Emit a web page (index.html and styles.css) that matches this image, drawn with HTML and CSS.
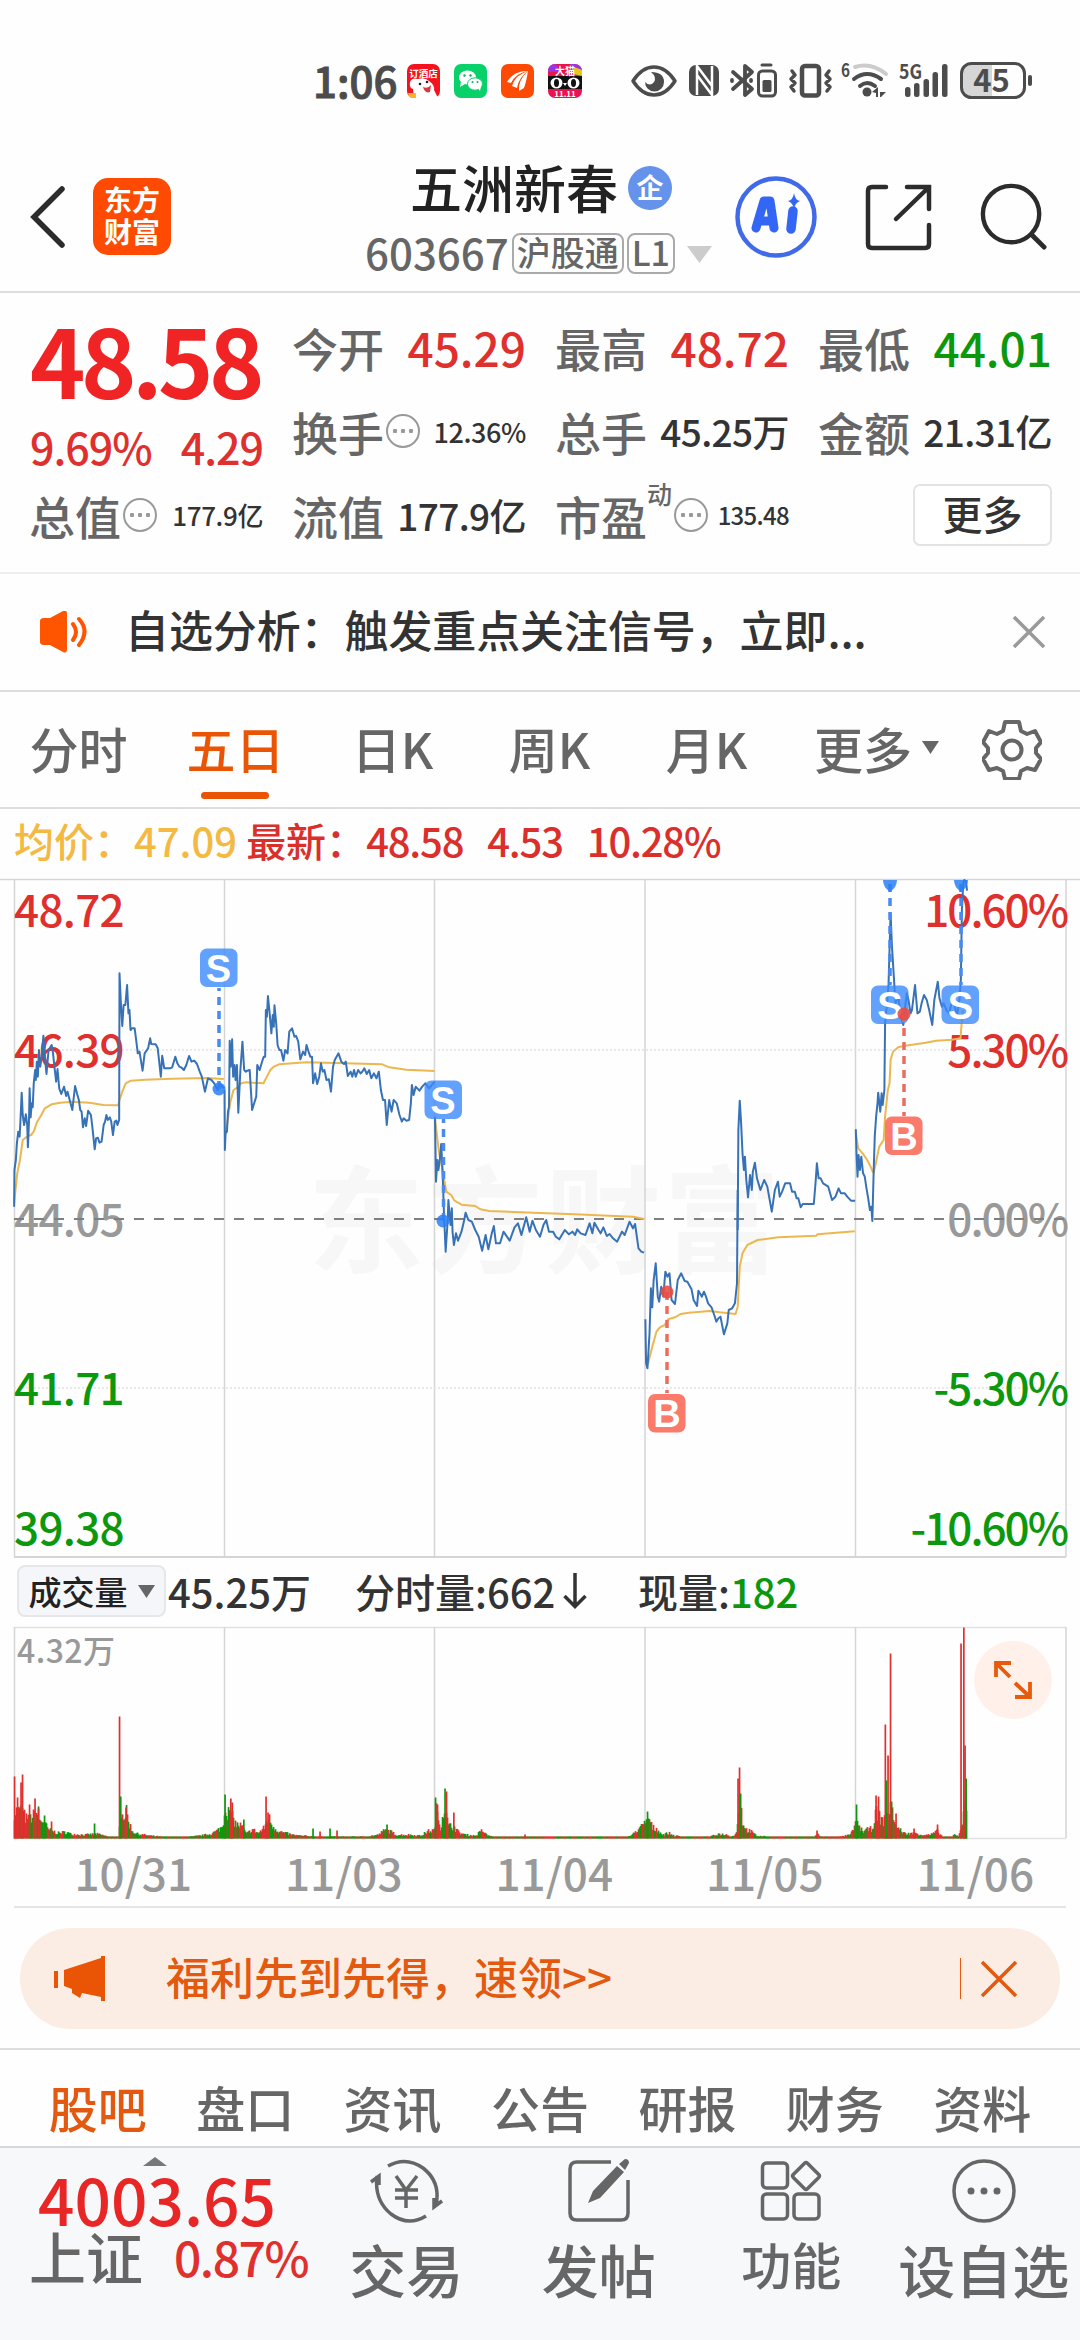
FILE: index.html
```html
<!DOCTYPE html>
<html lang="zh-CN">

<head>
    <meta charset="UTF-8">
    <meta name="viewport" content="width=device-width, initial-scale=1.0">
    <title>五洲新春 603667</title>
    <link rel="stylesheet" href="styles.css">
</head>

<body>
    <div class="status-bar">
        <span class="time">1:06</span>
        <div class="app-icons">
            <svg width="33" height="34" viewBox="0 0 33 34">
                <rect width="33" height="34" rx="7" fill="#f5121d" />
                <text x="16.500" y="13" font-size="9.500" font-weight="700" fill="#fff" text-anchor="middle">订酒店</text>
                <path d="M3 18q2-5 8-3q7-2 11 2q6 4 5 9l4 8H7l-1-9q-4-1-3-7z" fill="#fff" />
                <path d="M16 23q5 2 8-2l-1 7q-5 2-7-5z" fill="#e0353b" />
                <circle cx="13" cy="20" r="1.300" fill="#222" />
                <circle cx="20" cy="18" r="1.300" fill="#222" />
                <path d="M1 29h8v5H5q-3 0-4-5z" fill="#ffb32c" />
            </svg>
            <svg width="33" height="34" viewBox="0 0 33 34">
                <rect width="33" height="34" rx="7" fill="#09d16a" />
                <ellipse cx="13.500" cy="13.500" rx="8.500" ry="7" fill="#fff" />
                <path d="M7 18l-1 5l5-3z" fill="#fff" />
                <ellipse cx="21" cy="20" rx="7.500" ry="6.200" fill="#fff" stroke="#09d16a" />
                <path d="M24 24l2 3l1-5z" fill="#fff" />
                <g fill="#09b35c">
                    <circle cx="10.500" cy="11.500" r="1.200" />
                    <circle cx="16.500" cy="11.500" r="1.200" />
                    <circle cx="18.500" cy="18" r="1" />
                    <circle cx="23.500" cy="18" r="1" />
                </g>
            </svg>
            <svg width="33" height="34" viewBox="0 0 33 34">
                <rect width="33" height="34" rx="7" fill="#fd4a05" />
                <path d="M6 18q6-11 21-11q-12 2-17 12z" fill="#fff" />
                <path d="M11 22q3-11 16-15q-9 6-11 17z" fill="#fff" />
                <path d="M18 27q-1-11 9-20q-2 12-4 17z" fill="#fff" />
            </svg>
            <svg width="34" height="34" viewBox="0 0 34 34">
                <rect width="34" height="34" rx="7" fill="#ed1150" />
                <path d="M0 8q0-8 8-8l4 8zM22 0h5q7 1 7 8l-8 4z" fill="#9a35e0" />
                <path d="M26 3l8 3v6l-9-2z" fill="#e5c720" />
                <rect y="12" width="34" height="13" fill="#111" />
                <text x="17" y="11" font-size="10" font-weight="700" fill="#fff" text-anchor="middle">大猫</text>
                <g fill="#fff">
                    <ellipse cx="8.500" cy="19" rx="6" ry="5.500" />
                    <ellipse cx="25.500" cy="19" rx="6" ry="5.500" />
                    <path d="M15 19h4l-2 3z" />
                </g>
                <ellipse cx="8.500" cy="19" rx="2.500" ry="4" fill="#111" />
                <ellipse cx="25.500" cy="19" rx="2.500" ry="4" fill="#111" />
                <text x="17" y="32.500" font-size="8" font-weight="700" fill="#fff" text-anchor="middle">11.11</text>
            </svg>
        </div>
        <svg class="system-icons" width="410" height="44" viewBox="630 58 410 44">
            <g fill="none" stroke="#4c4c4c" stroke-width="3.500" stroke-linecap="round" stroke-linejoin="round">
                <path d="M633 81q9-14 21-14t21 14q-9 14-21 14t-21-14z" />
                <path d="M733 72l19 17l-7 6V66l7 6l-19 17M732 80v1M751 80v1" stroke-width="3.800" />
                <rect x="758.500" y="71" width="17" height="25" rx="4" stroke-width="3" />
                <path d="M762 65h9" stroke-width="3" />
                <rect x="802" y="66" width="17" height="29.500" rx="3" stroke-width="4.500" />
                <path d="M792 71l3 4l-4 4l4 4l-4 4l3 4M829 71l-3 4l4 4l-4 4l4 4l-3 4" stroke-width="3.500" />
                <path d="M855 67q16-5 31 7" stroke="#ccc" stroke-width="4" />
                <path d="M854 79q13-10 27 0M860 86q7-6 15 0" stroke-width="4" />
            </g>
            <g fill="#4c4c4c">
                <path d="M651 72q13 0 13 10a9 9 0 0 1-19 0q5 5 9 0q3-5-3-10z" />
                <rect x="689" y="65" width="30" height="31" rx="7" />
                <path d="M697 95V66l15 20M697 75l15 20V66" fill="none" stroke="#fff" stroke-width="2.500" />
                <rect x="762.500" y="80" width="9" height="12" rx="1.500" />
                <circle cx="867" cy="92" r="4.500" />
                <path d="M872 92l6-5v10h-2v-4zM880 87v5h6l-5 5h-1z" />
                <text x="841" y="77" font-size="19" font-weight="700" textLength="9" lengthAdjust="spacingAndGlyphs">6</text>
                <text x="899" y="79" font-size="20" font-weight="700" textLength="23" lengthAdjust="spacingAndGlyphs">5G</text>
                <rect x="905" y="87" width="5.500" height="10" rx="2.500" />
                <rect x="914" y="83" width="5.500" height="14" rx="2.500" />
                <rect x="923.500" y="79" width="5.500" height="18" rx="2.500" />
                <rect x="932.500" y="72" width="5.500" height="25" rx="2.500" />
                <rect x="942" y="64" width="5.500" height="33" rx="2.500" />
                <path d="M972 64h20v34h-20q-10 0-10-10V74q0-10 10-10z" fill="#d6d6d6" />
                <rect x="961.500" y="63.500" width="63" height="34" rx="10" fill="none" stroke="#4c4c4c" stroke-width="3" />
                <rect x="1028" y="75" width="4" height="11" rx="2" />
                <text x="991.500" y="92" font-size="31" font-weight="700" text-anchor="middle">45</text>
            </g>
        </svg>
    </div>

    <header class="header">
        <div class="header-left">
            <svg width="35" height="62" viewBox="0 0 35 62">
                <path d="M32 3L4 31l28 28" fill="none" stroke="#2c2c2c" stroke-width="5.500" stroke-linecap="round" />
            </svg>
            <div class="logo">东方<br>财富</div>
        </div>
        <div class="stock">
            <div class="stock-name">五洲新春<span class="stock-badge">企</span></div>
            <div class="stock-code">603667<span class="tag">沪股通</span><span class="tag">L1</span>
                <svg width="25" height="17" viewBox="0 0 25 17"><path d="M0 0h25L12.500 17z" fill="#ccc" /></svg>
            </div>
        </div>
        <div class="header-actions">
            <svg width="82" height="84" viewBox="734 175 82 84">
                <circle cx="775" cy="217" r="38.500" fill="none" stroke="#416ae9" stroke-width="4.500" />
                <path d="M755 228l8-27h6l4 27M758 221h12" fill="none" stroke="#3366f5" stroke-width="9" stroke-linecap="round" stroke-linejoin="round" />
                <path d="M792 211l-2 18" stroke="#3366f5" stroke-width="9.500" stroke-linecap="round" />
                <path d="M793 193q1 7 6 8q-5 2-6 8q-1-6-6-8q5-1 6-8z" fill="#3366f5" />
            </svg>
            <svg width="68" height="68" viewBox="862 183 68 68">
                <path d="M884 187h-14q-4 0-4 4v53q0 4 4 4h53q4 0 4-4v-19M905 187h22v22M925 189l-31 30" fill="none" stroke="#2c2c2c" stroke-width="4.500" stroke-linecap="round" />
            </svg>
            <svg width="68" height="68" viewBox="979 181 68 70">
                <circle cx="1011" cy="213" r="29" fill="none" stroke="#2c2c2c" stroke-width="4.500" />
                <path d="M1033 235l12 12" stroke="#2c2c2c" stroke-width="5" stroke-linecap="round" />
            </svg>
        </div>
    </header>

    <section class="quote">
        <div class="price-block">
            <div class="price">48.58</div>
            <div class="price-change"><span>9.69%</span><span>4.29</span></div>
        </div>
        <div class="cell"><label>今开</label><b class="red">45.29</b></div>
        <div class="cell"><label>最高</label><b class="red">48.72</b></div>
        <div class="cell"><label>最低</label><b class="green">44.01</b></div>
        <div class="cell"><label>换手</label><i class="info"></i><b class="small">12.36%</b></div>
        <div class="cell"><label>总手</label><b class="medium">45.25万</b></div>
        <div class="cell"><label>金额</label><b class="medium">21.31亿</b></div>
        <div class="cell"><label>总值</label><i class="info"></i><b class="small tight">177.9亿</b></div>
        <div class="cell"><label>流值</label><b class="medium">177.9亿</b></div>
        <div class="cell"><label>市盈</label><sup>动</sup><i class="info"></i><b class="tiny">135.48</b></div>
        <div class="cell"><button class="more-btn">更多</button></div>
    </section>

    <div class="notice">
        <svg width="51" height="42" viewBox="37 611 51 42">
            <path d="M40 621q0-3 4-3h6l13-7q4-2 4 3v35q0 5-4 3l-13-7h-6q-4 0-4-3z" fill="#ff5500" />
            <path d="M73 624q6 8 0 16M79 619q11 12 0 26" fill="none" stroke="#ff5500" stroke-width="4" stroke-linecap="round" />
        </svg>
        <span>自选分析：触发重点关注信号，立即...</span>
        <svg width="34" height="34" viewBox="0 0 34 34">
            <path d="M2 2l30 30M32 2L2 32" stroke="#999" stroke-width="3.500" />
        </svg>
    </div>

    <nav class="period-tabs">
        <a>分时</a>
        <a class="active">五日</a>
        <a>日K</a>
        <a>周K</a>
        <a>月K</a>
        <a class="more">更多<svg width="17" height="13" viewBox="0 0 17 13"><path d="M0 0h17L8.500 13z" fill="#666" /></svg></a>
        <svg class="gear" width="60" height="60" viewBox="981 720 60 60">
            <path d="M1004 722h14l2 9l6 3l8-3l6 11l-5 6v5l5 6l-6 11l-8-2l-6 3l-2 8h-14l-2-8l-6-3l-8 2l-6-11l5-6v-5l-5-6l6-11l8 3l6-3z" fill="none" stroke="#666" stroke-width="4" stroke-linejoin="round" />
            <circle cx="1011" cy="750" r="9.500" fill="none" stroke="#666" stroke-width="4" />
        </svg>
    </nav>

    <div class="legend">
        <span class="avg">均价：<em>47.09</em></span>
        <span class="last">最新：<em>48.58</em><em>4.53</em><em>10.28%</em></span>
    </div>

    <svg class="price-chart" width="1080" height="690" viewBox="0 870 1080 690">
        <text x="544" y="1264" class="watermark" text-anchor="middle" textLength="472">东方财富</text>
        <g class="grid">
            <path d="M0 879.500H1080" />
            <path d="M14.500 880V1557M224.500 880V1557M434.500 880V1557M645 880V1557M855.500 880V1557M1066 880V1557" />
            <path d="M14 1557H1066" stroke-width="2" />
            <path d="M14 1050H1066M14 1388H1066" stroke-dasharray="2 2" stroke="#e2e2e2" />
        </g>
        <g class="axis">
            <text x="14" y="927" class="red">48.72</text>
            <text x="14" y="1067" class="red">46.39</text>
            <text x="14" y="1236" class="gray">44.05</text>
            <text x="14" y="1405" class="green">41.71</text>
            <text x="14" y="1545" class="green">39.38</text>
        </g>
        <g class="axis end">
            <text x="1067" y="927" class="red">10.60%</text>
            <text x="1067" y="1067" class="red">5.30%</text>
            <text x="1067" y="1236" class="gray">0.00%</text>
            <text x="1067" y="1405" class="green">-5.30%</text>
            <text x="1067" y="1545" class="green">-10.60%</text>
        </g>
        <path d="M14 1219H1066" stroke="#808080" stroke-width="2" stroke-dasharray="10 10" />

        <!-- average price -->
        <g class="line avg-line">
            <g transform="translate(0 870) scale(.34439 .33333)">
                <path d="M41 1000L50 910L58 870L66 810L78 800L90 795L98 785L108 755L120 735L130 715L150 703L175 698L210 695L260 698L300 705L343 706L347 690L355 665L365 640L380 632L420 629L500 626L600 624L650 627" />
                <path d="M653 800L660 760L668 700L678 660L690 652L700 640L715 637L765 640L775 620L785 600L795 590L810 583L850 580L890 577L1000 580L1110 583L1130 592L1180 599L1262 603" />
                <path d="M1263 745L1275 850L1285 900L1290 930L1296 965L1310 975L1320 992L1340 1004L1380 1008L1395 1018L1420 1023L1568 1029L1668 1033L1838 1040L1871 1047" />
            </g>
            <g transform="translate(0 1200) scale(.68878 .33333)">
                <path d="M938 480L941 490L947 440L953 395L958 382L965 375L970 358L980 352L988 342L1000 338L1030 333L1045 337L1068 342L1071 320L1074 200L1078 160L1085 135L1100 120L1130 112L1185 107L1187 103L1241 94" />
            </g>
            <g transform="translate(540 870) scale(.34439 .33333)">
                <path d="M917 790L924 835L937 850L950 870L960 890L966 905L969 908L975 880L985 830L998 810L1002 740L1010 660L1015 640L1018 570L1025 545L1040 532L1060 527L1120 518L1150 512L1195 509L1221 505L1225 450L1228 420" />
            </g>
        </g>

        <!-- latest price -->
        <g class="line price-line">
            <g transform="translate(0 870) scale(.34439 .33333)">
                <path d="M41 1010L42 900L46 870L49 820L53 785L57 800L59 760L63 668L66 735L70 765L75 733L79 765L81 832L84 760L86 655L89 742L92 700L95 712L98 640L102 600L104 630L107 575L110 620L113 540L117 590L121 560L126 497L130 560L135 612L141 540L150 525L154 550L158 590L163 635L167 597L172 655L178 672L186 650L192 678L196 665L201 685L210 720L218 648L224 672L229 690L233 720L237 725L241 772L246 745L250 768L256 722L264 735L268 770L275 838L279 805L284 803L289 818L295 815L301 765L305 755L309 735L313 750L319 742L323 755L328 795L333 755L338 752L341 765L346 750L347 310L351 400L355 468L359 405L364 405L369 345L373 430L376 420L379 480L383 475L391 475L396 515L400 550L405 545L414 602L420 550L430 535L436 505L439 522L452 523L458 535L467 620L471 557L477 595L494 595L500 592L509 560L515 580L521 590L526 592L534 600L541 585L549 558L556 575L564 572L572 582L580 605L586 620L595 665L604 625L614 630L622 640L632 660L640 645L650 655" />
                <path d="M652 660L653 840L655 790L659 785L662 725L665 710L667 512L670 590L674 508L677 620L681 585L684 630L688 585L692 728L698 600L704 515L709 600L714 605L718 602L725 600L732 720L741 690L744 680L747 585L754 600L761 575L766 560L770 560L772 420L775 440L778 378L783 430L788 490L792 435L795 470L797 406L802 460L806 525L811 540L816 540L823 572L828 540L835 550L840 485L848 475L855 500L860 498L866 515L872 568L880 545L886 555L890 525L896 545L901 560L906 560L909 640L915 610L921 642L927 620L932 580L937 605L942 600L948 630L955 628L961 665L967 590L972 570L983 550L991 575L999 582L1004 575L1010 618L1018 605L1023 620L1028 600L1033 620L1040 600L1047 610L1052 605L1058 595L1065 612L1072 600L1078 625L1086 610L1093 625L1100 605L1106 660L1112 690L1118 690L1123 765L1130 690L1137 725L1143 690L1152 700L1160 735L1167 755L1172 745L1180 752L1188 750L1193 700L1196 645L1201 675L1207 650L1218 662L1226 650L1235 640L1246 655L1262 635" />
                <path d="M1263 740L1266 935L1270 870L1273 900L1277 870L1281 822L1284 880L1287 960L1288 1000L1290 1050" />
            </g>
            <g transform="translate(0 1200) scale(.68878 .33333)">
                <path d="M645 60L647 155L650 60L651 0L654 75L656 25L657 95L659 135L662 100L665 122L670 95L674 60L676 38L680 60L685 65L690 90L695 110L700 152L705 105L709 148L714 100L717 78L720 130L726 130L731 95L740 122L747 82L752 70L757 105L764 52L769 95L773 62L778 90L784 110L789 75L793 60L797 95L803 95L807 110L812 118L820 90L826 103L831 95L835 105L838 88L843 100L850 105L856 70L860 100L863 68L869 90L872 100L876 82L881 108L885 102L890 115L896 125L903 95L907 105L914 65L919 85L922 72L927 145L931 155L935 158" />
                <path d="M937 358L938 490L940 505L943 400L945 265L947 322L949 240L952 190L955 290L957 305L960 260L963 290L966 215L969 230L972 220L975 300L980 312L984 240L989 220L994 243L998 245L1004 268L1007 300L1012 318L1014 272L1019 290L1022 275L1025 290L1028 310L1033 322L1037 345L1040 365L1043 355L1046 350L1051 403L1056 370L1058 330L1063 325L1067 310L1070 250L1071 -30" />
            </g>
            <g transform="translate(540 870) scale(.34439 .33333)">
                <path d="M574 1080L576 780L580 692L584 760L588 850L592 900L595 860L599 930L604 982L610 915L615 960L618 905L624 878L630 925L640 960L651 930L660 950L673 1025L682 960L691 935L696 980L703 965L712 940L726 940L732 965L740 965L745 985L750 985L757 1012L763 1002L795 1002L800 940L804 880L809 925L815 925L822 940L837 950L848 990L858 980L867 955L874 970L885 970L892 980L903 992L915 992" />
                <path d="M917 778L919 850L922 920L925 855L929 900L933 860L938 910L943 920L948 955L953 985L958 1020L962 1010L965 1053L969 900L972 800L976 740L980 700L982 668L988 725L992 670L995 705L1000 660L1002 460L1008 400L1012 345L1018 130L1022 230L1028 330L1032 400L1040 380L1048 440L1055 465L1058 430L1065 370L1070 390L1076 430L1080 420L1089 345L1096 430L1103 425L1108 400L1115 375L1123 390L1130 420L1139 465L1145 390L1155 335L1160 385L1167 410L1172 400L1180 420L1188 430L1200 380L1210 440L1218 390L1222 330L1225 120L1229 40L1232 30L1237 35L1240 62" />
            </g>
        </g>

        <!-- buy / sell marks -->
        <g class="mark sell">
            <path d="M219 1089V988M443.500 1221V1119M890 884V985M961 884V985" />
            <circle cx="219" cy="1089" r="6.500" />
            <circle cx="443" cy="1221" r="6.500" />
            <path class="drop" d="M883 880h14q0 7-7 12q-7-5-7-12zM954 880h14q0 7-7 12q-7-5-7-12z" />
            <rect x="200" y="948.500" width="37.500" height="38.500" rx="7" />
            <rect x="424.500" y="1080.500" width="37.500" height="38.500" rx="7" />
            <rect x="871" y="985.500" width="37.500" height="38.500" rx="7" />
            <rect x="941.500" y="985.500" width="37.500" height="38.500" rx="7" />
            <text x="218.500" y="982">S</text>
            <text x="443" y="1114">S</text>
            <text x="890" y="1019">S</text>
            <text x="960.500" y="1019">S</text>
        </g>
        <g class="mark buy">
            <path d="M667 1292V1393M904 1014V1116" />
            <circle cx="667" cy="1292" r="6.500" />
            <circle cx="904" cy="1014" r="6.500" />
            <rect x="648" y="1394" width="37.500" height="38.500" rx="7" />
            <rect x="885" y="1116.500" width="37.500" height="38.500" rx="7" />
            <text x="667" y="1427">B</text>
            <text x="904" y="1150">B</text>
        </g>
    </svg>

    <div class="volume-info">
        <button class="indicator-btn">成交量<svg width="17" height="13" viewBox="0 0 17 13"><path d="M0 0h17L8.500 13z" fill="#666" /></svg></button>
        <span class="total">45.25万</span>
        <span class="minute">分时量:662<svg width="24" height="36" viewBox="0 0 24 36"><path d="M12 0v33M1.500 23L12 33.500L22.500 23" fill="none" stroke="#333" stroke-width="3.500" /></svg></span>
        <span>现量:<em class="green">182</em></span>
    </div>

    <svg class="volume-chart" width="1080" height="216" viewBox="0 1624 1080 216">
        <g class="grid">
            <path d="M14 1627.500H1066M14 1838.500H1066" stroke="#e2e2e2" />
            <path d="M14.500 1627V1838M224.500 1627V1838M434.500 1627V1838M645 1627V1838M855.500 1627V1838M1066 1627V1838" />
        </g>
        <text x="17" y="1663" font-size="32" textLength="98" fill="#999">4.32万</text>
        <g id="volume-bars"></g>
        <circle cx="1013" cy="1680" r="39" fill="#fff0e9" />
        <path d="M996 1677v-14h15M996 1663l14 14M1015 1683l15 14M1030 1682v15h-15" fill="none" stroke="#e85a0c" stroke-width="3.800" />
    </svg>

    <div class="dates">
        <span>10/31</span><span>11/03</span><span>11/04</span><span>11/05</span><span>11/06</span>
    </div>

    <div class="promo">
        <svg width="52" height="46" viewBox="53 1956 52 46">
            <path d="M54 1971h4v17h-4zM64 1970l37-12v-2h4v45h-4v-4l-19-4l-2 5l-8-5v-4l-8-3z" fill="#e95504" />
        </svg>
        <span>福利先到先得，速领&gt;&gt;</span>
        <i class="divider"></i>
        <svg width="38" height="38" viewBox="0 0 38 38">
            <path d="M2 2l34 34M36 2L2 36" stroke="#e2590f" stroke-width="3.500" />
        </svg>
    </div>

    <nav class="info-tabs">
        <a class="active">股吧</a>
        <a>盘口</a>
        <a>资讯</a>
        <a>公告</a>
        <a>研报</a>
        <a>财务</a>
        <a>资料</a>
    </nav>

    <footer class="footer">
        <div class="index">
            <svg width="24" height="9" viewBox="0 0 24 9"><path d="M0 9h24L12 0z" fill="#77787b" /></svg>
            <div class="index-value">4003.65</div>
            <div class="index-name">上证<span>0.87%</span></div>
        </div>
        <a>
            <svg width="74" height="66" viewBox="369 2158 74 66">
                <g fill="none" stroke="#666" stroke-width="3.500">
                    <path d="M388 2166q18-10 35 2q18 14 13 37M426 2216q-18 11-35-2q-17-14-14-38M371 2182l8-6v9M442 2201l-8 6v-9" />
                    <path d="M396 2176l10 14l11-14M406 2190v18M395 2190h23M395 2198h23" />
                </g>
            </svg>
            <span>交易</span>
        </a>
        <a>
            <svg width="64" height="66" viewBox="567 2158 64 66">
                <path d="M611 2162h-34q-7 0-7 7v44q0 7 7 7h44q7 0 7-7v-33" fill="none" stroke="#666" stroke-width="3.500" />
                <path d="M617 2166l7 6l-24 26l-12 5l5-12zM619 2164l6-5q4 0 4 4l-4 7z" fill="#666" />
            </svg>
            <span>发帖</span>
        </a>
        <a class="narrow">
            <svg width="62" height="66" viewBox="760 2158 62 66">
                <g fill="none" stroke="#666" stroke-width="3.500">
                    <rect x="762.500" y="2163" width="25" height="25" rx="4" />
                    <rect x="762.500" y="2194" width="25" height="25" rx="4" />
                    <rect x="794" y="2194" width="25" height="25" rx="4" />
                    <rect x="796" y="2166" width="20" height="20" rx="2" transform="rotate(45 806 2176)" />
                </g>
            </svg>
            <span>功能</span>
        </a>
        <a>
            <svg width="64" height="66" viewBox="951 2158 64 66">
                <circle cx="983" cy="2191" r="30" fill="none" stroke="#666" stroke-width="3.500" />
                <circle cx="970" cy="2191" r="3.500" fill="#666" />
                <circle cx="983" cy="2191" r="3.500" fill="#666" />
                <circle cx="996" cy="2191" r="3.500" fill="#666" />
            </svg>
            <span>设自选</span>
        </a>
    </footer>

    <script src="volume.js"></script>
</body>

</html>
```

FILE: styles.css
```css
* {
    box-sizing: border-box;
}

body {
    margin: 0;
    width: 1080px;
    height: 2340px;
    overflow: hidden;
    background-color: #fefefe;
    color: #333;
    font-family: 'Noto Sans CJK SC', 'Noto Sans', sans-serif;
    font-weight: 500;
    line-height: 1;
}

svg {
    display: block;
    flex-shrink: 0;
}

em,
i,
b {
    font-style: normal;
    font-weight: 500;
}

button {
    font-family: inherit;
    font-weight: 500;
    padding: 0;
    line-height: 1;
}

.red {
    color: #e0302e;
    fill: #e0302e;
}

.green {
    color: #0c980c;
    fill: #0c980c;
}

.gray {
    fill: #999;
}

.status-bar {
    height: 150px;
    padding: 10px 40px 0 313px;
    display: flex;
    align-items: center;
    color: #4c4c4c;
}

.time {
    width: 94px;
    font-size: 42px;
    -webkit-text-stroke: 1px #4c4c4c;
}

.app-icons {
    display: flex;
    gap: 14px;
    width: 223px;
    margin-top: 2px;
}

.header {
    height: 143px;
    border-bottom: 2px solid #ddd;
    display: flex;
    justify-content: space-between;
    padding: 0 33px 0 30px;
}

.header-left {
    display: flex;
    align-items: center;
    gap: 28px;
    padding-bottom: 8px;
    width: 330px;
}

.logo {
    width: 78px;
    height: 77px;
    padding-top: 5px;
    border-radius: 15px;
    background-color: #ff4a03;
    color: white;
    font-size: 28px;
    font-weight: 700;
    line-height: 32px;
    text-align: center;
}

.stock {
    flex: 1;
}

.stock-name {
    display: flex;
    align-items: center;
    height: 74px;
    padding-left: 50px;
    color: #222;
    font-size: 52px;
}

.stock-badge {
    width: 44px;
    height: 44px;
    margin: 2px 0 0 10px;
    border-radius: 50%;
    background-color: #6592ea;
    color: white;
    font-size: 27px;
    font-weight: 700;
    line-height: 41px;
    text-align: center;
}

.stock-code {
    display: flex;
    align-items: center;
    height: 56px;
    padding-left: 5px;
    font-size: 42px;
    color: #666;
}

.tag {
    height: 41px;
    margin: 3px 0 0 3px;
    padding: 0 3px;
    border: 2px solid #aaa;
    border-radius: 8px;
    font-size: 34px;
    line-height: 34px;
}

.stock-code svg {
    margin: 4px 0 0 12px;
}

.header-actions {
    display: flex;
    align-items: center;
    gap: 47px;
    padding-bottom: 8px;
}

.quote {
    height: 281px;
    padding: 14px 30px 0;
    border-bottom: 2px solid #eee;
    display: grid;
    grid-template-columns: repeat(4, 233px);
    grid-template-rows: repeat(3, 84px);
    column-gap: 30px;
}

.price-block {
    grid-row: span 2;
    color: #f02424;
}

.price {
    height: 118px;
    padding-top: 4px;
    font-size: 94px;
    font-weight: 700;
    letter-spacing: -4.5px;
}

.price-change {
    display: flex;
    justify-content: space-between;
    color: #e0302e;
    font-size: 43px;
    letter-spacing: -1px;
}

.cell {
    display: flex;
    align-items: center;
    padding-bottom: 4px;
}

.cell label {
    margin-left: -1px;
    font-size: 46px;
    color: #666;
}

.cell b {
    margin-left: auto;
    font-size: 46px;
}

.cell .medium {
    font-size: 37px;
    letter-spacing: -.6px;
}

.cell .small {
    font-size: 27px;
    letter-spacing: -.4px;
}

.cell .tight {
    font-size: 26px;
}

.cell .tiny {
    font-size: 24px;
    letter-spacing: -.7px;
}

.cell sup {
    align-self: flex-start;
    margin-top: 6px;
    font-size: 25px;
    color: #666;
}

.info {
    width: 34px;
    height: 34px;
    margin-left: 2px;
    border: 2px solid #999;
    border-radius: 50%;
    background: radial-gradient(circle, #999 2px, transparent 2.5px) center / 8px 8px content-box no-repeat, radial-gradient(circle, #999 2px, transparent 2.5px) 3px center / 8px 8px no-repeat, radial-gradient(circle, #999 2px, transparent 2.5px) 19px center / 8px 8px no-repeat;
}

.more-btn {
    width: 139px;
    height: 62px;
    margin-left: auto;
    padding-bottom: 5px;
    border: 2px solid #e3e3e3;
    border-radius: 7px;
    background-color: white;
    color: #333;
    font-size: 40px;
}

.notice {
    height: 118px;
    border-bottom: 2px solid #ddd;
    display: flex;
    align-items: center;
    padding: 0 34px 0 37px;
}

.notice span {
    flex: 1;
    margin-left: 37px;
    padding-bottom: 6px;
    font-size: 44px;
    letter-spacing: -.1px;
}

.period-tabs {
    height: 117px;
    border-bottom: 2px solid #ddd;
    display: flex;
    align-items: center;
}

.period-tabs a {
    position: relative;
    width: 157px;
    padding-bottom: 5px;
    font-size: 49px;
    color: #666;
    text-align: center;
}

.period-tabs .active {
    color: #e95504;
}

.period-tabs .active::after {
    content: "";
    position: absolute;
    left: 44px;
    bottom: -22px;
    width: 68px;
    height: 7px;
    border-radius: 4px;
    background-color: #e95504;
}

.period-tabs .more {
    width: 197px;
    padding-left: 29px;
    display: flex;
    align-items: center;
    gap: 10px;
}

.legend {
    height: 61px;
    padding: 11px 14px;
    display: flex;
    gap: 9px;
    font-size: 40px;
}

.avg {
    color: #f4b942;
}

.last {
    color: #db2f2c;
}

.last em {
    margin-right: 24px;
    letter-spacing: -1.2px;
}

.grid {
    fill: none;
    stroke: #d5d5d5;
    stroke-width: 1.5;
}

.watermark {
    font-size: 116px;
    font-weight: 700;
    fill: #f7f7f7;
}

.axis {
    font-size: 44px;
    letter-spacing: -.7px;
}

.end {
    text-anchor: end;
    letter-spacing: -2px;
}

.line path {
    fill: none;
    stroke-width: 2;
    stroke-linejoin: round;
    vector-effect: non-scaling-stroke;
}

.avg-line {
    stroke: #edb750;
}

.price-line {
    stroke: #3872b6;
}

.mark path {
    fill: none;
    stroke-width: 3.5;
    stroke-dasharray: 8 6;
}

.mark text {
    font-family: 'Liberation Sans', sans-serif;
    font-size: 38px;
    font-weight: 700;
    fill: white;
    text-anchor: middle;
}

.sell path {
    stroke: #478bf0;
}

.sell circle,
.sell .drop {
    fill: #2a7ff5;
    fill-opacity: .85;
    stroke: none;
}

.sell rect {
    fill: #3b8afc;
    fill-opacity: .8;
}

.buy path {
    stroke: #ec6d60;
}

.buy circle {
    fill: #e94b43;
    fill-opacity: .9;
}

.buy rect {
    fill: #fa7b6b;
}

.volume-info {
    height: 64px;
    display: flex;
    align-items: center;
    padding: 0 17px 2px;
    font-size: 40px;
}

.indicator-btn {
    width: 149px;
    height: 52px;
    border: 2px solid #e6e7ea;
    border-radius: 8px;
    background-color: #f5f6f9;
    display: flex;
    align-items: center;
    justify-content: center;
    gap: 10px;
    color: #222;
    font-size: 33px;
}

.total {
    width: 187px;
    margin-left: 2px;
}

.minute {
    width: 283px;
    display: flex;
    align-items: center;
    gap: 8px;
}

.dates {
    height: 68px;
    margin: 0 14px;
    padding: 10px 0 0 14px;
    border-bottom: 2px solid #e5e5e5;
    display: flex;
    color: #999;
    font-size: 44px;
}

.dates span {
    flex: none;
    width: 210.5px;
    text-align: center;
}

.promo {
    height: 101px;
    margin: 20px 20px 19px;
    padding: 0 42px 0 33px;
    border-radius: 50px;
    background-color: #fcede4;
    display: flex;
    align-items: center;
    color: #e2590f;
    font-size: 44px;
}

.promo span {
    flex: 1;
    margin-left: 61px;
    padding-bottom: 5px;
}

.divider {
    width: 1px;
    height: 41px;
    margin-right: 19px;
    background-color: #e2590f;
}

.info-tabs {
    height: 100px;
    padding: 32px 24px 0;
    border-top: 2px solid #ddd;
    border-bottom: 2px solid #d5d8da;
    display: flex;
    font-size: 49px;
    color: #666;
}

.info-tabs a {
    flex: 1;
    text-align: center;
}

.info-tabs .active {
    color: #e2590f;
}

.footer {
    height: 192px;
    background-color: #f7f8fa;
    display: flex;
    color: #666;
    font-size: 57px;
}

.footer a {
    flex: 1;
    padding-top: 10px;
    display: flex;
    flex-direction: column;
    align-items: center;
    gap: 16px;
    white-space: nowrap;
}

.footer .narrow {
    gap: 14px;
    font-size: 50px;
}

.index {
    width: 310px;
    padding: 9px 0 0 29px;
}

.index svg {
    margin-left: 114px;
}

.index-value {
    height: 61px;
    padding-left: 9px;
    color: #e92626;
    font-size: 64px;
}

.index-name {
    display: flex;
    align-items: center;
    white-space: nowrap;
}

.index-name span {
    margin-left: 31px;
    color: #e0302e;
    font-size: 48px;
    letter-spacing: -1.5px;
}
```

FILE: volume.js
```js
// [x, height] envelope of the traded volume
const envelope = [
    [14, 30], [22, 30], [24, 25], [27, 20], [30, 22], [35, 27], [38, 28], [40, 18], [44, 20], [47, 10],
    [52, 8], [58, 6], [66, 7], [70, 5], [85, 4], [96, 5], [105, 3], [109, 1], [118, 1], [120, 38],
    [122, 25], [126, 28], [129, 16], [132, 8], [137, 5], [150, 3], [160, 2], [175, 1], [190, 2], [200, 3],
    [210, 5], [216, 8], [222, 13], [225, 36], [228, 28], [232, 23], [236, 15], [241, 14], [246, 5],
    [252, 10], [258, 6], [264, 12], [268, 24], [272, 14], [278, 8], [284, 6], [292, 4], [300, 3],
    [320, 2], [365, 2], [378, 4], [384, 9], [389, 8], [396, 4], [410, 4], [420, 3], [428, 8], [434, 9],
    [436, 30], [440, 13], [444, 35], [448, 14], [454, 12], [458, 7], [465, 4], [475, 3], [482, 9],
    [486, 4], [495, 1], [625, 1], [632, 4], [638, 11], [643, 14], [648, 22], [652, 12], [657, 10],
    [662, 4], [668, 6], [674, 3], [690, 1], [710, 2], [718, 5], [728, 4], [730, 1], [736, 6], [739, 50],
    [742, 20], [745, 10], [750, 8], [756, 3], [775, 1], [814, 1], [817, 6], [820, 1], [840, 2],
    [850, 4], [855, 15], [858, 15], [862, 8], [872, 11], [875, 28], [879, 25], [882, 18], [886, 24],
    [892, 34], [895, 14], [900, 9], [905, 5], [915, 6], [922, 4], [930, 4], [937, 8], [942, 2],
    [950, 1], [955, 5], [958, 2], [962, 20], [966, 40], [967, 2]
];

const peaks = [
    [14.5, 62, 1], [17.5, 41, 1], [21, 56, 1], [22.5, 64, 1], [29.5, 34, 1], [35, 40, 1], [38.5, 30, 1],
    [44.5, 23, 0], [51.5, 17, 1], [94.5, 15, 0], [119.5, 122, 1], [120.7, 42, 0], [126, 31, 1],
    [225, 44, 0], [230.8, 40, 1], [232.3, 36, 1], [243.8, 19, 0], [266, 42, 1], [268, 26, 1],
    [313, 10, 0], [320, 7, 1], [330, 10, 0], [337, 8, 1], [387, 14, 0], [435.5, 41, 0], [437.5, 34, 1],
    [445, 50, 0], [446.5, 47, 1], [453.8, 26, 1], [525, 4, 1], [647.5, 27, 0], [738, 60, 1],
    [739.5, 71, 1], [740.6, 45, 0], [817, 8, 1], [856.5, 34, 0], [876, 43, 1], [878.5, 42, 1],
    [885.3, 114, 1], [886.5, 58, 0], [888, 83, 1], [890.5, 185, 1], [891.6, 37, 0], [896, 25, 1],
    [914, 10, 1], [937.5, 14, 1], [961, 195, 1], [963.8, 211, 1], [965, 93, 1], [966.1, 60, 0]
];

const base = 1838.5;
const colors = ['#0c980c', '#e0302e'];
const bars = document.getElementById('volume-bars');

function addBar(x, height, up) {
    const bar = document.createElementNS('http://www.w3.org/2000/svg', 'rect');
    bar.setAttribute('x', x - 0.8);
    bar.setAttribute('y', base - height);
    bar.setAttribute('width', 1.7);
    bar.setAttribute('height', height);
    bar.setAttribute('fill', colors[up]);
    bars.appendChild(bar);
}

let seed = 7;
function random() {
    seed = (seed * 16807) % 2147483647;
    return seed / 2147483647;
}

for (let i = 0; i < envelope.length - 1; i++) {
    const [x1, h1] = envelope[i];
    const [x2, h2] = envelope[i + 1];
    for (let x = x1; x < x2; x++) {
        const h = h1 + (h2 - h1) * (x - x1) / (x2 - x1);
        addBar(x + 0.5, Math.max(2, h * (0.6 + random() * 0.6)), random() > 0.5 ? 1 : 0);
    }
}
peaks.forEach(p => addBar(...p));
```
